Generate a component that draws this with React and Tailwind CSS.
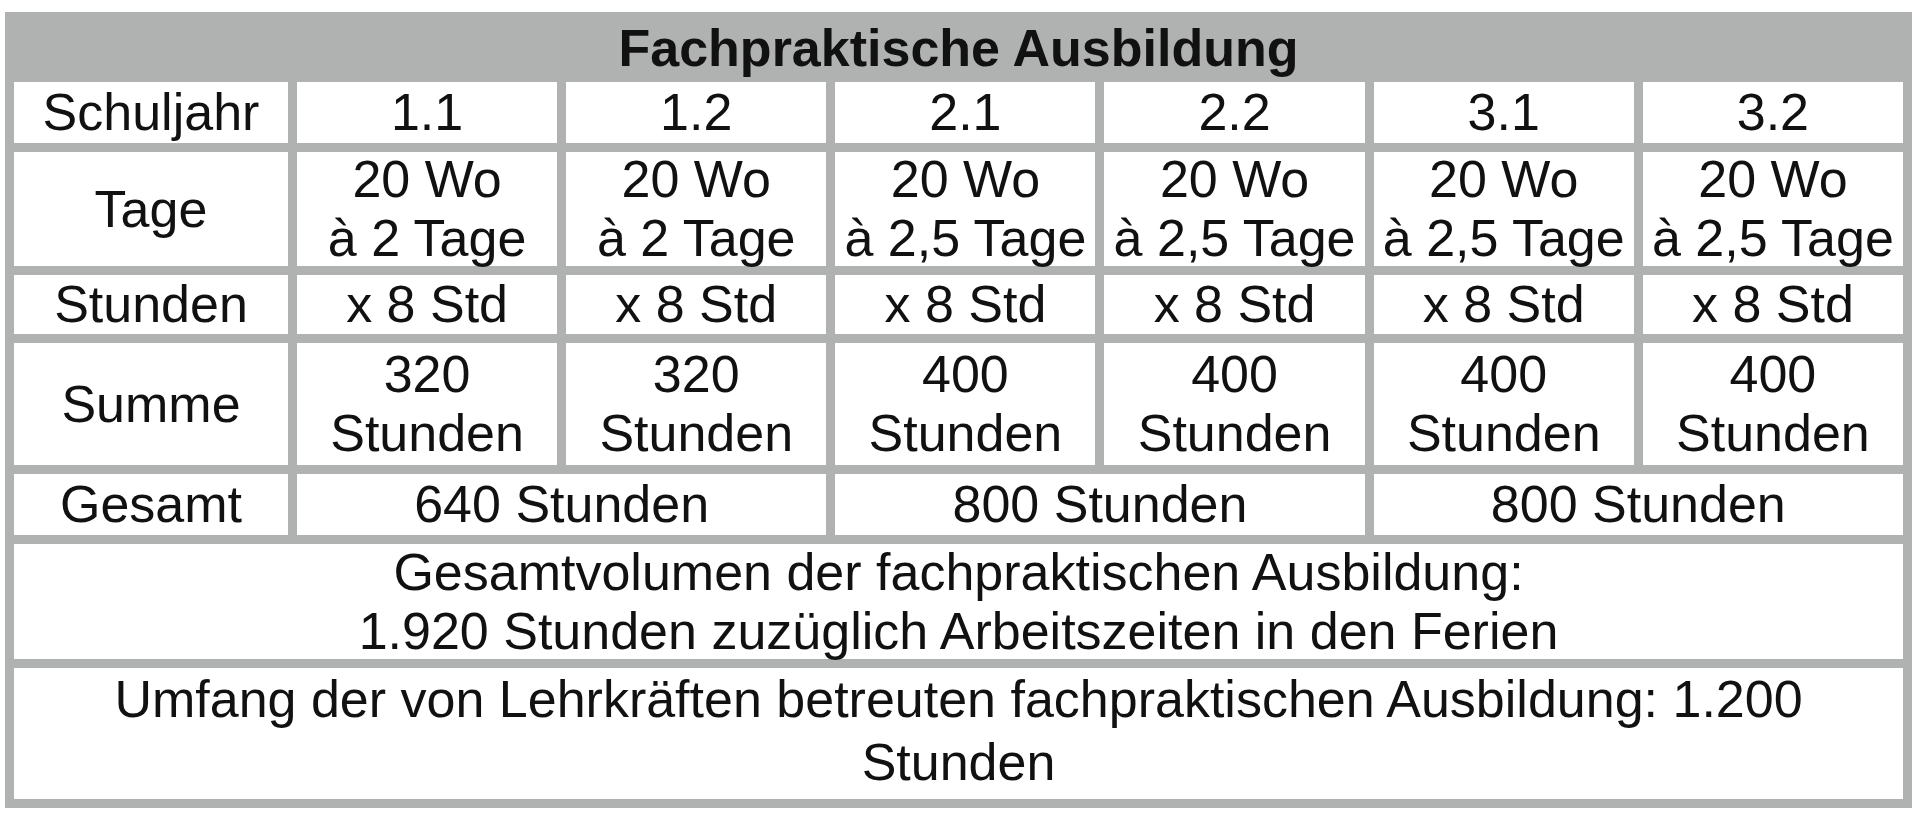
import React from 'react'

const years = ['1.1', '1.2', '2.1', '2.2', '3.1', '3.2']
const tage = ['à 2 Tage', 'à 2 Tage', 'à 2,5 Tage', 'à 2,5 Tage', 'à 2,5 Tage', 'à 2,5 Tage']
const summe = ['320', '320', '400', '400', '400', '400']
const gesamt = ['640 Stunden', '800 Stunden', '800 Stunden']

const Cell = ({ children, className = '' }) => (
  <div className={`bg-white flex flex-col items-center justify-center text-center ${className}`}>
    {children}
  </div>
)

const App = () => {
  return (
    <div className="w-[1920px] h-[821px] bg-white overflow-hidden pt-[12px] pl-[5px]">
      {/* Tabelle */}
      <div
        className="w-[1907px] grid grid-cols-[274px_repeat(6,1fr)] grid-rows-[52px_61px_114px_59px_122px_61px_115px_131px] gap-[9px] p-[9px] bg-[#b0b1b1] text-[#111] text-[52px] leading-[59px]"
        style={{ fontFamily: '"Liberation Sans", Arial, sans-serif' }}
      >
        <div className="col-span-7 flex items-center justify-center font-bold text-[52px] leading-[52px] pt-[2px]">
          Fachpraktische Ausbildung
        </div>

        <Cell>Schuljahr</Cell>
        {years.map((y) => (
          <Cell key={y}>{y}</Cell>
        ))}

        <Cell>Tage</Cell>
        {tage.map((t, i) => (
          <Cell key={i}>
            <div>20 Wo</div>
            <div>{t}</div>
          </Cell>
        ))}

        <Cell>Stunden</Cell>
        {years.map((y) => (
          <Cell key={y}>x 8 Std</Cell>
        ))}

        <Cell>Summe</Cell>
        {summe.map((s, i) => (
          <Cell key={i}>
            <div>{s}</div>
            <div>Stunden</div>
          </Cell>
        ))}

        <Cell>Gesamt</Cell>
        {gesamt.map((g, i) => (
          <Cell key={i} className="col-span-2">
            {g}
          </Cell>
        ))}

        <Cell className="col-span-7">
          <div>Gesamtvolumen der fachpraktischen Ausbildung:</div>
          <div>1.920 Stunden zuzüglich Arbeitszeiten in den Ferien</div>
        </Cell>

        <Cell className="col-span-7 justify-start pt-[2px]">
          <div>Umfang der von Lehrkräften betreuten fachpraktischen Ausbildung: 1.200</div>
          <div className="mt-[4px]">Stunden</div>
        </Cell>
      </div>
    </div>
  )
}

export default App
